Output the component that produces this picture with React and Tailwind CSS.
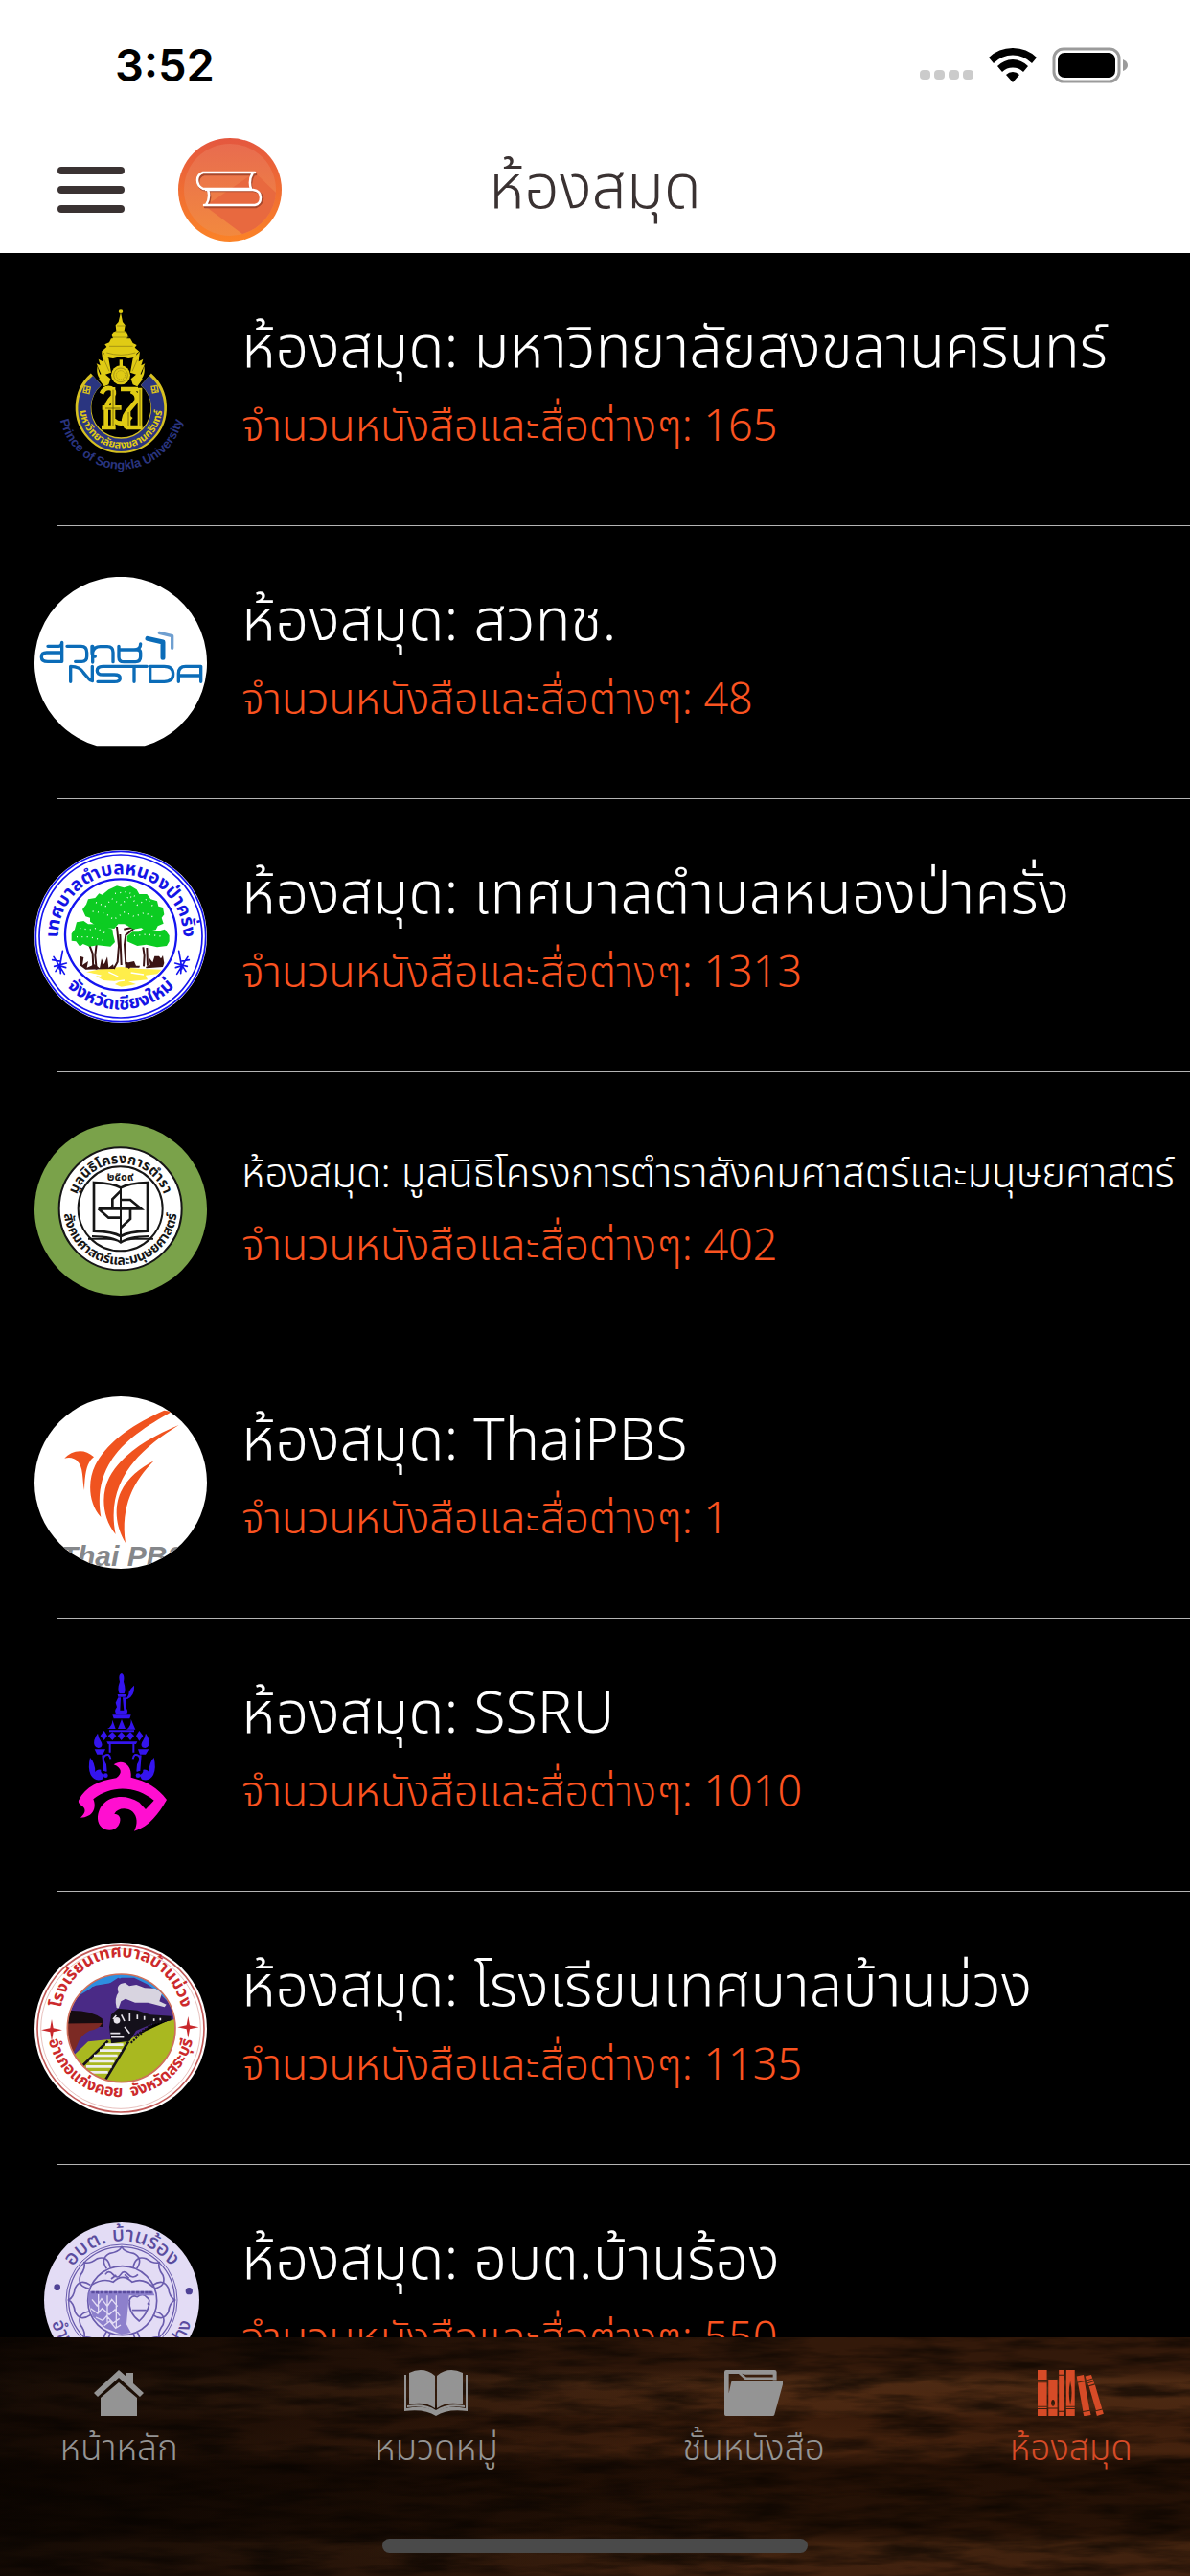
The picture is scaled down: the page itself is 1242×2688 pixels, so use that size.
const fontThai = 'font-["Noto_Sans_Thai","Noto_Sans",sans-serif]'

// text that runs along an arc of a seal
function ArcText({ id, d, size, children, className = '' }) {
    return (
        <>
            <path id={id} d={d} fill="none" />
            <text fontSize={size} textAnchor="middle" className={className}>
                <textPath href={`#${id}`} startOffset="50%">{children}</textPath>
            </text>
        </>
    )
}

function PsuLogo() {
    return (
        <svg viewBox="18 51 540 540" className="w-full h-full overflow-visible">
            <path d="M211 287 A118 118 0 1 0 367 287" fill="none" stroke="#d6c021" strokeWidth="50" />
            <path d="M214 291 A115 115 0 1 0 364 291" fill="none" stroke="#2a3580" strokeWidth="40" />
            <g fill="none" stroke="#d6c021" strokeWidth="4">
                <path d="M175 308l18 4-4 20-18-4zM171 322l22-3M184 308l-4 24M384 310l18-3 4 19-18 4zM383 319l22 3M394 308l3 22" />
            </g>
            <g fill="#e0cb14">
                <circle cx="288" cy="74" r="7" />
                <path d="M288 78l6 30 8 10-3 18 8 4 4 14-5 6 14 14-6 4H258l-6-4 12-16-4-8 4-10 10-4-2-18 9-10z" />
                <path d="M258 160h60l8 14 12 6-6 8 14 12-8 6-4 12-22 4-24-6-24 6-24-4-4-12-8-6 16-14-6-8 14-6z" />
                <path d="M228 200l22 22 8 44-18 6 16 14-6 18-14 6-16-22 6-18-14-32 12 6-6-20 14 8zM348 200l-22 22-8 44 18 6-16 14 6 18 14 6 16-22-6-18 14-32-12 6 6-20-14 8z" />
                <path d="M216 244c2 26 12 40 30 42l-4 20c-10-2-14-8-14-16-12-8-18-28-12-46zM360 244c-2 26-12 40-30 42l4 20c10-2 14-8 14-16 12-8 18-28 12-46z" />
                <circle cx="288" cy="274" r="30" />
                <path d="M284 226h10v24h-10z" />
            </g>
            <g fill="none" stroke="#8a7a14" strokeWidth="2">
                <circle cx="288" cy="274" r="22" />
                <circle cx="288" cy="274" r="14" strokeDasharray="3 3" />
                <path d="M262 156h52M252 184h74M244 204q44 14 90 0M276 120h24M272 138h32M236 226l16 36M340 226l-16 36" />
            </g>
            <g fill="none" stroke="#e0cb14" strokeWidth="14">
                <path d="M228 332q10-22 30-16 14 6 6 24-22 22-22 44v52M264 312v124M228 438h44M230 376h60M264 414q30 26 56-10" />
                <path d="M288 318h54M348 314v124M334 438h22M306 438q-18-22 2-48l30-36q4-22-18-30M312 386v50M306 438h34" />
            </g>
            <g fill="none" stroke="#4c430a" strokeWidth="2">
                <path d="M264 320v112M348 320v114M312 390v42M240 378h46" />
            </g>
            <ArcText id="psu-th" d="M161 358 A129 129 0 1 0 417 358" size={33} className="fill-[#e0cb14] font-bold">มหาวิทยาลัยสงขลานครินทร์</ArcText>
            <ArcText id="psu-en" d="M96 345 A196 196 0 1 0 484 345" size={39} className='fill-[#2a3580] font-bold font-["Liberation_Sans",sans-serif]'>Prince of Songkla University</ArcText>
        </svg>
    )
}

function NstdaLogo() {
    return (
        <svg viewBox="18 36 540 540" className="w-full h-full">
            <path d="M213 565 A270 270 0 1 1 363 565z" fill="#fff" />
            <g fill="none" stroke="#0b6cb8" strokeWidth="10" strokeLinecap="round" strokeLinejoin="round">
                <path d="M104 241v60H60q-20 0-20-14 0-14 16-14h48M60 253h34q10 0 10-12" />
                <path d="M120 253h44q18 0 18 20v12q0 16-16 16h-20" />
                <path d="M198 253v20q0 12 10 12M200 253v50M200 272q4-18 24-18h22q18 0 18 18v30" />
                <path d="M282 253v34q0 15 16 15h36q16 0 16-16v-12q0-10-10-10h-58M330 264q20 0 20-18" />
                <path d="M131 364v-48q30 0 42 22l14 16q6 8 12 8v-46" />
                <path d="M286 316h-54q-18 0-18 13t18 13h36q18 0 18 11t-18 11h-52M286 316h84M330 316v48" />
                <path d="M380 316h44q28 0 28 24t-28 24h-44zM469 364v-26q0-22 22-22h48v48M469 345h70" />
            </g>
            <path d="M372 229l48 11v49" fill="none" stroke="#0b6cb8" strokeWidth="15" strokeLinecap="round" strokeLinejoin="round" />
            <path d="M409 211l40 10v38" fill="none" stroke="#6f9fd0" strokeWidth="10" strokeLinecap="round" strokeLinejoin="round" />
        </svg>
    )
}

function TreeLogo() {
    return (
        <svg viewBox="18 36 540 540" className="w-full h-full">
            <circle cx="288" cy="306" r="270" fill="#fff" />
            <g fill="none" stroke="#1414f0">
                <circle cx="288" cy="306" r="266" strokeWidth="5" />
                <circle cx="288" cy="306" r="255" strokeWidth="5" />
                <circle cx="288" cy="301" r="174" strokeWidth="7" />
            </g>
            <path d="M180 418l60-12 50-4 60 6 66 2-14 14-36 4 6 14-60 6 24 8-46 8-20-8 14-8-50-4-24-14 20-2z" fill="#ffee4a" />
            <path d="M186 422l40 8M250 418l30 14M320 420l40 6M270 448l30-4" stroke="#fff" strokeWidth="4" />
            <path d="M276 276l6 60-4 50-12 22M298 284l38-8-32 26-4 30 4 60 12 14M286 300l4 96M190 334l10 26 2 46M212 332l-4 34 4 44M358 340l4 26-2 34M370 342l2 56" fill="none" stroke="#3a1414" strokeWidth="6" />
            <path d="M160 368l12 4-4 24 18-12-4 20 24-10 16 12 6-30 8 18 10-24 4 34 14-10 4 14-90 2-16-12zM302 386l10 2 18-4 6 14 12 0-2 6-44 0zM366 402l14-6-4-24 12 16 6-20 14 0 6 8 6-10 4 24-4 12-52 4z" fill="#3a1414" />
            <g fill="#0ccc22">
                <path d="M250 160l26-12 22 6 20-6 20 12 8 14 24 0 12 16 20 6 4 16 14 4 4 22-8 10 6 18-18 8-6 12-30 2-16-8-24 4-28-16-20 0-12 14-28-2-16-12-12 6-20-14 0-12-14-4-10-22 12-16 6-16 22-4 12-14 10 4z" />
                <path d="M150 262l22-4 14 10 20 0 16-6 18 14 22 8 2 16 6 24-14 14-40-4-26 4-20-8-10 8-12-16-14-2 0-22 10-14zM324 292l20 0 16-10 24 2 20 6 22-6 14 20 0 18-8 14-30 4-34-8-28 4-32-14 0-16z" />
            </g>
            <g fill="none" stroke="#fff" strokeWidth="4" strokeDasharray="3 13">
                <path d="M210 200l30 12 20-24 30 20 26-30 24 30 32-20 20 30M200 228l40 6 26 20 34-24 30 14 34-12 30 16M270 172l40-6 30 20M160 280l30 6 22-6 34 20M150 308l40 0 40 10M330 304l40-4 46 6" />
            </g>
            <g stroke="#1414f0" strokeWidth="5" strokeLinecap="round" fill="none">
                <path d="M78 370l34 54M106 352l-10 56M80 400l38-10M74 380l24 4M100 422l-2-22M84 416l14-22M116 404l-20-6" />
                <path d="M498 370l-34 54M470 352l10 56M496 400l-38-10M502 380l-24 4M476 422l2-22M492 416l-14-22M460 404l20-6" />
            </g>
            <ArcText id="tree-top" d="M97 352 A196 196 0 1 1 479 352" size={57} className="fill-[#1414e6] font-bold">เทศบาลตำบลหนองป่าครั่ง</ArcText>
            <ArcText id="tree-bottom" d="M78 402 A232 232 0 0 0 498 402" size={57} className="fill-[#1414e6] font-bold">จังหวัดเชียงใหม่</ArcText>
        </svg>
    )
}

function TextbookLogo() {
    return (
        <svg viewBox="18 36 540 540" className="w-full h-full">
            <circle cx="288" cy="306" r="270" fill="#7aa24a" />
            <circle cx="287" cy="304" r="192" fill="#fff" stroke="#161616" strokeWidth="6" />
            <circle cx="287" cy="304" r="132" fill="none" stroke="#161616" strokeWidth="6" />
            <g fill="none" stroke="#161616" strokeWidth="8">
                <path d="M204 222q60 2 84 16 26-14 84-16v152q-60 2-84 16-24-14-84-16z" />
                <path d="M288 238v170M198 390q68 0 90 20 22-20 88-20M186 398h58q30 0 44 12 16-12 46-12h56" strokeWidth="6" />
                <path d="M288 248l-26 26v30M218 304h134L318 276h-30M352 304l-34 0 0 32-30 28M218 304l32 28h38" />
            </g>
            <text x="287" y="216" fontSize="36" textAnchor="middle" className="fill-[#161616] font-bold">๒๕๐๙</text>
            <ArcText id="book-top" d="M147 272 A144 144 0 0 1 427 272" size={44} className="fill-[#161616] font-bold">มูลนิธิโครงการตำรา</ArcText>
            <ArcText id="book-bottom" d="M112 276 A177 177 0 1 0 462 276" size={42} className="fill-[#161616] font-bold">สังคมศาสตร์และมนุษยศาสตร์</ArcText>
        </svg>
    )
}

function ThaiPbsLogo() {
    return (
        <svg viewBox="18 36 540 540" className="w-full h-full">
            <clipPath id="pbs-clip">
                <circle cx="288" cy="306" r="270" />
            </clipPath>
            <g clipPath="url(#pbs-clip)">
                <rect x="18" y="36" width="540" height="540" fill="#fff" />
                <g fill="#f0531f">
                    <path d="M112 230c20-24 62-34 92-4-20 16-28 40-30 104-8-36 0-84-32-98-10-5-20-4-30-2z" />
                    <path d="M424 80L448 84C320 156 196 240 226 414 186 370 184 300 208 252 246 176 330 122 424 80z" />
                    <path d="M470 126C350 200 238 300 272 468 228 414 226 340 252 290 292 214 380 164 470 126z" />
                    <path d="M392 238C330 300 286 380 303 495 270 440 268 380 288 336 310 290 348 262 392 238z" />
                </g>
                <text x="98" y="566" fontSize="90" className='fill-[#85878a] font-bold italic font-["Liberation_Sans",sans-serif]'>Thai PBS</text>
            </g>
        </svg>
    )
}

function SsruLogo() {
    return (
        <svg viewBox="18 36 540 540" className="w-full h-full">
            <path d="M156 446c22-44 64-62 118-70 20-14 18-32-8-42 26-20 58 0 54 40 50 12 84 32 112 70-26 44-54 84-102 98 12-22 10-46-4-60-20-16-48-12-58 6 22 2 22 22 12 38-20 26-62 12-64-22 0-66 74-88 130-52l20 22 26-28c-56-46-132-50-190-4 12 28-2 58-40 58 14-12 18-24 8-34-8-8-16-10-14-20z" fill="#ff0fd0" />
            <g fill="#3414ee">
                <path d="M291 48q10 4 6 26 8 24 2 38h-15q-8-14 1-38-6-22 6-26zM278 114h26l-2 8h-22zM280 124h8l-2 40h12l-4-40h10l2 18-2 14q12 14-2 22h-24q-14-8-2-24l-4-14z" />
                <path d="M330 86q2 32-20 42l-10 2q14-8 14-24 6-12 16-20zM262 178h58l-4 12h-50z" />
                <path d="M262 194l10 28h-26q16-8 16-28zM291 192l12 30h-24zM320 192l14 32h-28q16-10 14-32zM276 196l14 18M252 226h78v6h-78z" />
                <path d="M236 228l10 16-10 14-12-14zM262 232l12 12-12 14-14-14zM290 232l12 12-12 14-12-14zM318 232l12 12-12 14-12-14zM346 228l12 16-12 16-10-16zM244 262h96l-4 8h-88z" />
                <path d="M216 236q-16 22-10 38 6 12 20 6 8-8-2-22-6-10-8-22zM366 236q16 22 10 38-6 12-20 6-8-8 2-22 6-10 8-22zM206 286h34l-8 16h-18zM342 286h34l-10 16h-18z" />
                <path d="M192 312q-8 34 2 54 12 22 36 14l8-14q-14-4-12-16-14-2-18 8 0-30-16-46zM392 312q8 34-2 54-12 22-36 14l-8-14q14-4 12-16 14-2 18 8 0-30 16-46z" />
                <circle cx="241" cy="368" r="7" />
                <circle cx="342" cy="368" r="7" />
            </g>
            <path d="M254 270v26M328 270v26M256 316q-4-20-18-10-10 10 2 28l2 22M326 316q4-20 18-10 10 10-2 28l-2 22M232 304l4 50M350 304l-4 50" fill="none" stroke="#3414ee" strokeWidth="6" />
        </svg>
    )
}

function TrainLogo() {
    return (
        <svg viewBox="18 36 540 540" className="w-full h-full">
            <clipPath id="train-clip">
                <circle cx="290" cy="304" r="168" />
            </clipPath>
            <circle cx="288" cy="306" r="270" fill="#fff" />
            <circle cx="288" cy="306" r="261" fill="none" stroke="#c25a58" strokeWidth="5" />
            <circle cx="288" cy="306" r="250" fill="none" stroke="#dba09c" strokeWidth="2" />
            <g clipPath="url(#train-clip)">
                <rect x="110" y="130" width="360" height="350" fill="#4a2a86" />
                <path d="M120 240l40-40 50-30 50-8 30-16 40 0 40 20 30 20 40 40V120H120z" fill="#2e8fe0" />
                <path d="M130 250l30-40 40-36 50-8 30-20 24 12 20 30 60 0 80 60v60H130z" fill="#4a2a86" />
                <path d="M275 240q-8-30 6-48-10-26 20-30l14 10 22-4 26 10 34 2 20 14-8 26 22 10-6 8-52-14-40 0-30-12-14 8-8 22z" fill="#d8d4e0" />
                <path d="M110 250q80-6 120 24l4 26-124-6z" fill="#160c10" />
                <path d="M110 290l120-2q-10 20-40 24-30 16-38 44l-20 40-30-20z" fill="#7c2a24" />
                <path d="M130 400l56-54 60-6 70 0 60-40 100-30v220H130z" fill="#a9b820" />
                <path d="M252 300l6-38 22-20 60 6 40 14 66 4v14l-60 10-50 22-20 32-58 8z" fill="#14101a" />
                <path d="M264 276l10-12M290 262l10 20M316 258v24M340 262v14M362 266v12M256 320h30M258 332h40M300 300l16 20M392 274v8M412 272v8" stroke="#e6e2ea" strokeWidth="5" fill="none" />
                <circle cx="276" cy="280" r="10" fill="#e6e2ea" />
                <path d="M248 344l-78 76M312 346l-72 120" stroke="#14101a" strokeWidth="8" />
                <path d="M240 356h56M222 374h68M204 390h74M190 408h78M180 424h80M180 442h68" stroke="#eeeef0" strokeWidth="8" />
                <path d="M330 330l60-40 56-14M320 350l50-46" stroke="#14101a" strokeWidth="6" strokeDasharray="6 4" />
            </g>
            <circle cx="290" cy="304" r="169" fill="none" stroke="#d0705a" strokeWidth="5" />
            <path d="M72 276l5 28 28 6-28 6-5 28-5-28-28-6 28-6zM499 267l5 28 28 6-28 6-5 28-5-28-28-6 28-6z" fill="#c8282c" />
            <ArcText id="train-top" d="M100 300 A191 191 0 1 1 478 300" size={52} className="fill-[#cc2a2c] font-bold">โรงเรียนเทศบาลบ้านม่วง</ArcText>
            <ArcText id="train-bottom" d="M60 330 A232 232 0 0 0 516 330" size={50} className="fill-[#cc2a2c] font-bold">อำเภอแก่งคอย &#160;จังหวัดสระบุรี</ArcText>
        </svg>
    )
}

function LotusLogo() {
    const angles = [0, 45, 90, 135, 180, 225, 270, 315]
    return (
        <svg viewBox="0 0 540 540" className="w-full h-full">
            <circle cx="273" cy="264" r="243" fill="#e3dcf5" />
            <g fill="none" stroke="#6a5cae" strokeWidth="5">
                <circle cx="273" cy="264" r="174" strokeWidth="3" />
                <circle cx="273" cy="264" r="166" strokeWidth="4" />
                {angles.map((a) => (
                    <path key={a} transform={`rotate(${a} 273 264)`} d="M226 166q-22-32 10-48 28-4 37-20 9 16 37 20 32 16 10 48" />
                ))}
                <circle cx="275" cy="266" r="108" />
                <path d="M180 216q36-22 66-8 30-30 60 0 34-16 66 16" />
                <path d="M222 184q10-16 24 0t24 0q10-16 24 0t30 0M240 198l16-12M296 196l-14-12" />
                <path d="M296 268q6-22 26-14 18-14 30 2 14 8 2 22M298 266q-6 36 30 64 26-24 32-56M306 296h44" />
            </g>
            <path d="M170 236l200 0 6 14-80 0-8 90 14 26-30 6-50-20-40-36-14-50z" fill="#8d80cc" />
            <path d="M180 262l16 20 14-22 18 24 14-22 18 22M176 290l22 16 14-16 22 20 18-16 16 20M192 318l22 10 12-14 20 22 20-14M218 344l18-14 18 22 16-10M200 246v60M228 250v84M256 250v100" fill="none" stroke="#e3dcf5" strokeWidth="4" />
            <path d="M178 240h190" stroke="#5a4c9e" strokeWidth="8" strokeDasharray="10 4" />
            <circle cx="71" cy="224" r="10" fill="#4f4296" />
            <circle cx="484" cy="236" r="11" fill="#4f4296" />
            <ArcText id="lotus-top" d="M88 264 A185 185 0 0 1 458 264" size={64} className="fill-[#5a4c9e] font-medium">อบต. บ้านร้อง</ArcText>
            <ArcText id="lotus-bottom" d="M49 244 A226 226 0 1 0 497 244" size={58} className="fill-[#5a4c9e] font-medium">อำเภองาว &#160; จังหวัดลำปาง</ArcText>
        </svg>
    )
}

const libraries = [
    { id: 1, name: 'มหาวิทยาลัยสงขลานครินทร์', total: 165, Logo: PsuLogo },
    { id: 2, name: 'สวทช.', total: 48, Logo: NstdaLogo },
    { id: 3, name: 'เทศบาลตำบลหนองป่าครั่ง', total: 1313, Logo: TreeLogo },
    { id: 4, name: 'มูลนิธิโครงการตำราสังคมศาสตร์และมนุษยศาสตร์', total: 402, Logo: TextbookLogo },
    { id: 5, name: 'ThaiPBS', total: 1, Logo: ThaiPbsLogo },
    { id: 6, name: 'SSRU', total: 1010, Logo: SsruLogo },
    { id: 7, name: 'โรงเรียนเทศบาลบ้านม่วง', total: 1135, Logo: TrainLogo },
    { id: 8, name: 'อบต.บ้านร้อง', total: 550, Logo: LotusLogo },
]

function HomeIcon() {
    return (
        <svg viewBox="0 0 52 48" className="h-12" fill="currentColor">
            <path d="M26 0l8 7V3h7v11l11 10-4 4L26 8 4 28l-4-4zM26 13l19 16v19H7V29z" />
        </svg>
    )
}

function OpenBookIcon() {
    return (
        <svg viewBox="0 0 66 48" className="h-12" fill="currentColor">
            <path d="M5 3Q20-4 32 6v34Q21 32 5 36zM34 6Q46-4 61 3v33q-16-4-27 4z" />
            <path d="M0 5h2v35q20-4 31 4 11-8 31-4V5h2v38q-21-3-33 5-12-8-33-5z" />
            <path d="M3 37q19-3 30 5 11-8 30-5v2q-19-3-30 6-11-9-30-6z" />
        </svg>
    )
}

function FolderIcon() {
    return (
        <svg viewBox="42 38 186 145" className="h-12" fill="currentColor">
            <path d="M42 44q0-6 6-6h152q7 0 7 7v25h-12V52h-88l-10-3 14 12h84v7h-88L87 50H56v62l8-36q1-5 6-5h154q5 0 4 6l-28 102q-1 4-6 4H47q-5 0-5-5z" />
        </svg>
    )
}

function ShelfIcon() {
    return (
        <svg viewBox="1026 38 208 145" className="h-12" fill="currentColor">
            <path d="M1026 38h29v30h-29zM1026 71h29v4h-29zM1026 78h29v74h-29zM1026 155h29v4h-29zM1026 162h29v21h-29z" />
            <path fillRule="evenodd" d="M1060 68h28v89h-28zM1074 132a6 10 0 1 0 1 0zM1060 160h28v23h-28z" />
            <path d="M1093 38h17v14h-17zM1093 55h17v112h-17zM1093 170h17v13h-17z" />
            <path fillRule="evenodd" d="M1116 38h27v114h-27zM1129 73q-8 38 0 76 9-38 0-76zM1116 155h27v4h-27zM1116 162h27v21h-27z" />
            <path d="M1149 58l22-5 3 18-22 5zM1153 79l21-4 16 89-21 4zM1169 171l22-4 3 13-22 4z" />
            <path d="M1176 58l19-5 4 11-19 6zM1181 73l19-6 2 5-19 6zM1184 81l19-6 2 6-18 6zM1188 90l19-5 22 75-19 6zM1209 169l21-6 4 13-21 7z" />
        </svg>
    )
}

const tabs = [
    { label: 'หน้าหลัก', Icon: HomeIcon },
    { label: 'หมวดหมู่', Icon: OpenBookIcon },
    { label: 'ชั้นหนังสือ', Icon: FolderIcon },
    { label: 'ห้องสมุด', Icon: ShelfIcon, active: true },
]

function StatusBar() {
    return (
        <div className="flex h-33 items-center justify-between pt-1 pr-16 pl-30">
            <span className='font-["Inter",sans-serif] text-[47px] leading-[48px] font-semibold text-black'>3:52</span>
            <div className="flex items-center gap-4">
                <div className="flex gap-1 self-end pb-1">
                    {[1, 2, 3, 4].map((n) => (
                        <span key={n} className="h-[10px] w-[11px] rounded-sm bg-[#cbcbcb]" />
                    ))}
                </div>
                <svg viewBox="0 0 50 36" className="h-9">
                    <path d="M25 0a36 36 0 0 1 25 10l-5 6a28 28 0 0 0-40 0l-5-6A36 36 0 0 1 25 0zM25 12a24 24 0 0 1 16 7l-5 6a16 16 0 0 0-22 0l-5-6a24 24 0 0 1 16-7zM25 25a11 11 0 0 1 7 3l-7 8-7-8a11 11 0 0 1 7-3z" />
                </svg>
                <svg viewBox="0 0 80 38" className="h-[38px]">
                    <rect x="2" y="2" width="68" height="34" rx="10" fill="none" stroke="#9b9b9b" strokeWidth="3" />
                    <rect x="6" y="6" width="60" height="26" rx="7" />
                    <path d="M74 13q5 2 5 6t-5 6z" fill="#9b9b9b" />
                </svg>
            </div>
        </div>
    )
}

function AppLogo() {
    return (
        <svg viewBox="0 0 108 108" className="size-27">
            <defs>
                <linearGradient id="ring" x1="0" y1="0" x2="0" y2="1">
                    <stop offset="0" stopColor="#e4573f" />
                    <stop offset="1" stopColor="#fb8327" />
                </linearGradient>
                <linearGradient id="disc" x1="0" y1="0" x2="0" y2="1">
                    <stop offset="0" stopColor="#e86c4f" />
                    <stop offset="1" stopColor="#f2893f" />
                </linearGradient>
            </defs>
            <circle cx="54" cy="54" r="54" fill="url(#ring)" />
            <circle cx="54" cy="54" r="48" fill="url(#disc)" />
            <path d="M80 36l22 21a48 48 0 0 1-35 43L28 71z" fill="#e8693f" />
            <g fill="none" strokeWidth="2.5" strokeLinejoin="round" strokeLinecap="round">
                <path d="M81 38H27q-6 2-6 8t6 8h49M79 38q-5 8-2 16M30 55h49q9 2 9 8t-7 9H28M32 56q3 8-2 15" stroke="#a8482c" />
                <path d="M80 36H26q-6 2-6 8t6 9h49M78 36q-5 8-2 17M29 54h49q8 1 8 8t-6 8H27M31 54q3 8-2 16" stroke="#fff" />
            </g>
        </svg>
    )
}

function Wood() {
    return (
        <svg className="absolute inset-0 h-full w-full" viewBox="0 0 1242 249" preserveAspectRatio="none" aria-hidden="true">
            <defs>
                <filter id="grain" x="0" y="0" width="100%" height="100%" colorInterpolationFilters="sRGB">
                    <feTurbulence type="fractalNoise" baseFrequency="0.012 0.08" numOctaves="4" seed="4" />
                    <feColorMatrix values="0 0 0 0 0.02  0 0 0 0 0.01  0 0 0 0 0  2.4 0 0 0 -0.9" />
                </filter>
                <linearGradient id="planks" x1="0" y1="0" x2="0" y2="1">
                    <stop offset="0" stopColor="#33190a" />
                    <stop offset="0.13" stopColor="#33190a" />
                    <stop offset="0.18" stopColor="#4d2a13" />
                    <stop offset="0.3" stopColor="#4a2711" />
                    <stop offset="0.34" stopColor="#3a1c0b" />
                    <stop offset="0.48" stopColor="#46230e" />
                    <stop offset="0.54" stopColor="#231005" />
                    <stop offset="0.82" stopColor="#261206" />
                    <stop offset="0.87" stopColor="#42230f" />
                    <stop offset="1" stopColor="#40210f" />
                </linearGradient>
                <linearGradient id="shade">
                    <stop offset="0" stopColor="#050200" stopOpacity="0.75" />
                    <stop offset="0.3" stopColor="#050200" stopOpacity="0.4" />
                    <stop offset="0.65" stopColor="#050200" stopOpacity="0" />
                </linearGradient>
            </defs>
            <rect width="1242" height="249" fill="url(#planks)" />
            <rect width="1242" height="249" filter="url(#grain)" opacity="0.6" />
            <rect width="1242" height="249" fill="url(#shade)" />
        </svg>
    )
}

export default function App() {
    return (
        <div className={`flex h-screen flex-col overflow-hidden bg-black font-light ${fontThai}`}>
            <header className="shrink-0 bg-white">
                <StatusBar />
                <div className="grid h-33 grid-cols-[1fr_auto_1fr] items-center px-15">
                    <div className="flex items-center gap-14">
                        <button type="button" aria-label="เมนู" className="flex w-[70px] flex-col gap-3">
                            <span className="h-2 rounded-full bg-[#3a3232]" />
                            <span className="h-2 rounded-full bg-[#3a3232]" />
                            <span className="h-2 rounded-full bg-[#3a3232]" />
                        </button>
                        <AppLogo />
                    </div>
                    <h1 className="text-[64px] leading-[80px] text-[#3a3232]">ห้องสมุด</h1>
                </div>
            </header>

            <main className="min-h-0 flex-1 overflow-hidden">
                <ul>
                    {libraries.map(({ id, name, total, Logo }) => (
                        <li key={id} className="flex h-[285px] flex-col">
                            <a href={`#library-${id}`} className="flex flex-1 gap-9 pl-9">
                                <div className="mt-[53px] size-45 shrink-0">
                                    <Logo />
                                </div>
                                <div className="pt-15 whitespace-nowrap">
                                    <div className="flex h-20 items-end text-white">
                                        <h2 className={name.length > 30 ? 'text-[42px] leading-[66px]' : 'text-[61px] leading-[80px]'}>
                                            ห้องสมุด: {name}
                                        </h2>
                                    </div>
                                    <p className="mt-3 text-[45px] leading-[60px] text-[#fa5320]">จำนวนหนังสือและสื่อต่างๆ: {total}</p>
                                </div>
                            </a>
                            <div className="ml-15 h-px bg-[#b4b4b4]" />
                        </li>
                    ))}
                </ul>
            </main>

            <nav className="relative h-[249px] shrink-0">
                <Wood />
                <div className="relative flex h-full flex-col items-center justify-between pt-[34px] pb-6">
                    <div className="flex w-full justify-between">
                        {tabs.map(({ label, Icon, active }) => (
                            <a
                                key={label}
                                href="#"
                                aria-current={active ? 'page' : undefined}
                                className={`flex w-1/5 flex-col items-center gap-[10px] ${active ? 'text-[#d64b27]' : 'text-[#949494]'}`}
                            >
                                <Icon />
                                <span className="text-[37px] leading-[50px]">{label}</span>
                            </a>
                        ))}
                    </div>
                    <div className="h-[15px] w-[444px] rounded-full bg-[#4a4a4a]" />
                </div>
            </nav>
        </div>
    )
}
